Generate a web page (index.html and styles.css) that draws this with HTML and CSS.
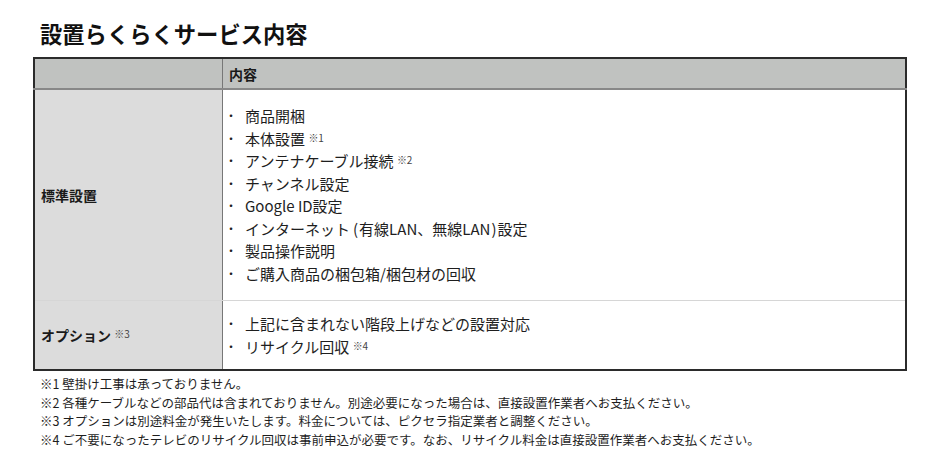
FILE: index.html
```html
<!DOCTYPE html>
<html lang="ja">
<head>
<meta charset="utf-8">
<link rel="stylesheet" href="styles.css">
</head>
<body>
<div class="page">
  <h1 class="title">設置らくらくサービス内容</h1>
  <table class="svc">
    <thead>
      <tr><th class="corner"></th><th class="head">内容</th></tr>
    </thead>
    <tbody>
      <tr class="row1">
        <th class="label">標準設置</th>
        <td class="content">
          <ul class="list">
            <li>商品開梱</li>
            <li>本体設置 <span class="note">※1</span></li>
            <li>アンテナケーブル接続 <span class="note">※2</span></li>
            <li>チャンネル設定</li>
            <li>Google ID設定</li>
            <li>インターネット<span class="paren">(</span>有線LAN、無線LAN<span class="paren">)</span>設定</li>
            <li>製品操作説明</li>
            <li>ご購入商品の梱包箱/梱包材の回収</li>
          </ul>
        </td>
      </tr>
      <tr class="row2">
        <th class="label">オプション <span class="note">※3</span></th>
        <td class="content">
          <ul class="list">
            <li>上記に含まれない階段上げなどの設置対応</li>
            <li>リサイクル回収 <span class="note">※4</span></li>
          </ul>
        </td>
      </tr>
    </tbody>
  </table>
  <div class="notes">
    <p>※1 壁掛け工事は承っておりません。</p>
    <p>※2 各種ケーブルなどの部品代は含まれておりません。別途必要になった場合は、直接設置作業者へお支払ください。</p>
    <p>※3 オプションは別途料金が発生いたします。料金については、ピクセラ指定業者と調整ください。</p>
    <p>※4 ご不要になったテレビのリサイクル回収は事前申込が必要です。なお、リサイクル料金は直接設置作業者へお支払ください。</p>
  </div>
</div>
</body>
</html>
```
FILE: styles.css
```css
html, body {
  margin: 0;
  padding: 0;
  background: #fff;
}
body {
  font-family: "Noto Sans CJK JP", "Noto Sans", sans-serif;
  color: #1a1a1a;
}
.page {
  padding: 18px 0 0 33px;
  width: 874px;
}
.title {
  margin: 0 0 9px 7px;
  font-size: 22.3px;
  line-height: 30px;
  font-weight: 700;
  color: #111;
}
.svc {
  width: 874px;
  border-collapse: collapse;
  border: 2px solid #2b2b2b;
  font-size: 15px;
}
.svc th, .svc td {
  padding: 0 6px;
  text-align: left;
  vertical-align: middle;
}
.corner, .head {
  background: #c0c2c0;
  height: 29px;
  border-bottom: 2px solid #888;
  font-weight: 700;
  font-size: 14px;
}
.corner {
  width: 175px;
  border-right: 1px solid #777;
}
.label {
  background: #dcdcdc;
  border-right: 1px solid #777;
  font-weight: 700;
  font-size: 14px;
}
.row1 .content {
  padding-top: 15px;
  padding-bottom: 15px;
}
.row1 td, .row1 th {
  border-bottom: 1px solid #d6d6d6;
}
.row2 .content {
  padding-top: 12px;
  padding-bottom: 11px;
}
.list {
  list-style: none;
  margin: 0;
  padding: 0;
}
.list li {
  height: 22.5px;
  line-height: 22.5px;
  padding-left: 16px;
  position: relative;
  color: #1e1e1e;
}
.list li::before {
  content: "・";
  position: absolute;
  left: -4px;
  top: 0;
  font-size: 12px;
}
.paren {
  margin: 0 1px 0 3px;
}
.paren + .paren {
  margin: 0 1px;
}
.note {
  font-size: 10px;
  line-height: 0;
  font-weight: 400;
  color: #444;
  vertical-align: 3px;
}
.notes {
  padding: 4px 0 0 7px;
  font-size: 12.5px;
  color: #1e1e1e;
}
.notes p {
  margin: 0;
  line-height: 18.7px;
}
```
